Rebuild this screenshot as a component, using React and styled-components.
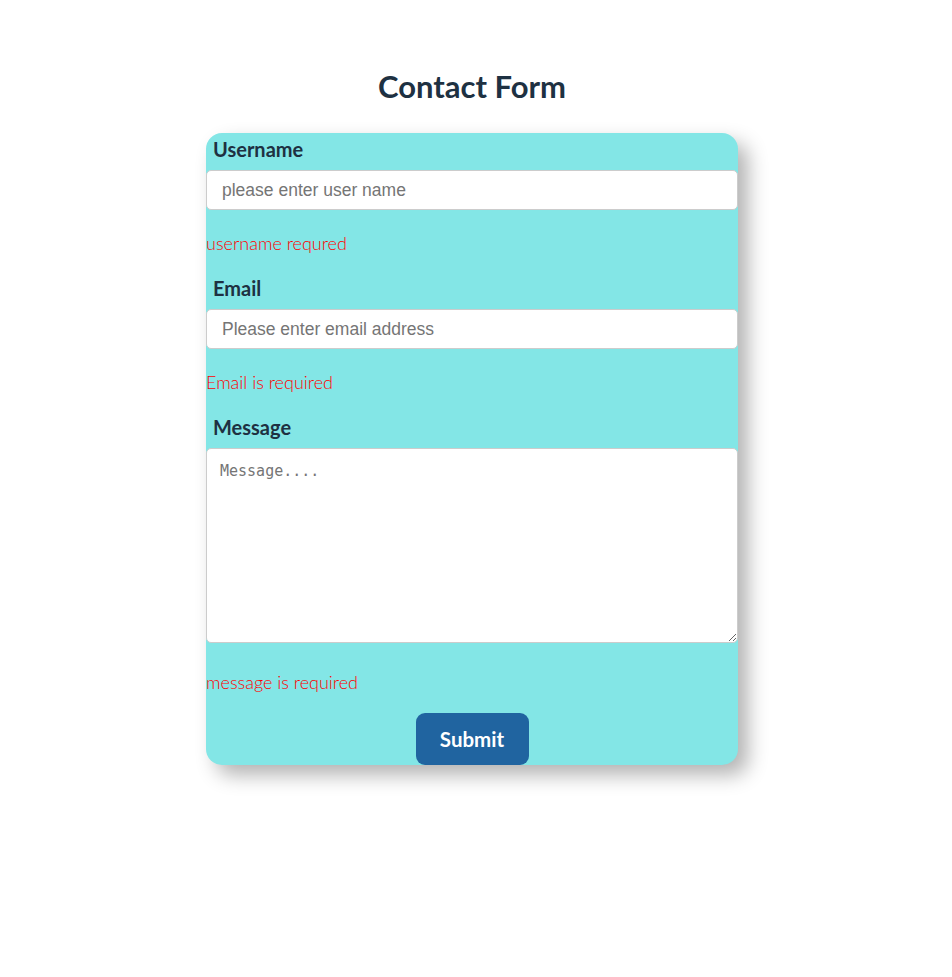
import React from "react";
import styled, { createGlobalStyle } from "styled-components";

const Global = createGlobalStyle`
  html, body { margin: 0; padding: 0; background: #ffffff; }
  body { font-family: Lato, "Open Sans", sans-serif; }
  * { box-sizing: border-box; }
`;

const Page = styled.div`
  display: flex;
  flex-direction: column;
  align-items: center;
  width: 944px;
  padding: 67px 0 60px;
`;

const Title = styled.h1`
  margin: 0 0 28px;
  font-family: Lato, "Open Sans", sans-serif;
  font-size: 31px;
  line-height: 38px;
  font-weight: 700;
  color: #1e3142;
`;

const Card = styled.form`
  width: 532px;
  background: #83e6e6;
  border-radius: 16px;
  box-shadow: 10px 10px 20px rgba(0, 0, 0, 0.3);
  display: flex;
  flex-direction: column;
  padding-top: 4px;
`;

const Label = styled.label`
  display: block;
  margin: ${(p) => (p.$first ? "0" : "22px")} 0 9px 7px;
  font-size: 20px;
  line-height: 24px;
  font-weight: 700;
  color: #1e3142;
`;

const Input = styled.input`
  display: block;
  width: 100%;
  height: 40px;
  margin: 0;
  padding: 0 15px;
  border: 1px solid #cccccc;
  border-radius: 5px;
  background: #ffffff;
  font-family: "Liberation Sans", Arial, sans-serif;
  font-size: 17.5px;
  color: #333;
  outline: none;
  &::placeholder { color: #757575; }
`;

const TextArea = styled.textarea`
  display: block;
  width: 100%;
  height: 195px;
  margin: 0 0 6px;
  padding: 12px 13px;
  border: 1px solid #cccccc;
  border-radius: 5px;
  background: #ffffff;
  font-family: "DejaVu Sans Mono", "Liberation Mono", monospace;
  font-size: 15px;
  line-height: 20px;
  resize: both;
  outline: none;
  &::placeholder { color: #757575; }
`;

const ErrorText = styled.p`
  margin: 22px 0 0;
  font-family: Lato, "Open Sans", sans-serif;
  font-size: 18px;
  line-height: 22px;
  font-weight: 300;
  color: #ff0000;
`;

const Submit = styled.button`
  align-self: center;
  margin-top: 20px;
  width: 113px;
  height: 52px;
  border: none;
  border-radius: 9px;
  background: #2064a0;
  color: #ffffff;
  font-family: Lato, "Open Sans", sans-serif;
  font-size: 20.5px;
  font-weight: 700;
  cursor: pointer;
`;

export default function App() {
  return (
    <>
      <Global />
      <Page>
        <Title>Contact Form</Title>
        <Card onSubmit={(e) => e.preventDefault()}>
          <Label $first htmlFor="username">Username</Label>
          <Input id="username" type="text" placeholder="please enter user name" />
          <ErrorText>username requred</ErrorText>

          <Label htmlFor="email">Email</Label>
          <Input id="email" type="email" placeholder="Please enter email address" />
          <ErrorText>Email is required</ErrorText>

          <Label htmlFor="message">Message</Label>
          <TextArea id="message" placeholder="Message...." />
          <ErrorText>message is required</ErrorText>

          <Submit type="submit">Submit</Submit>
        </Card>
      </Page>
    </>
  );
}
